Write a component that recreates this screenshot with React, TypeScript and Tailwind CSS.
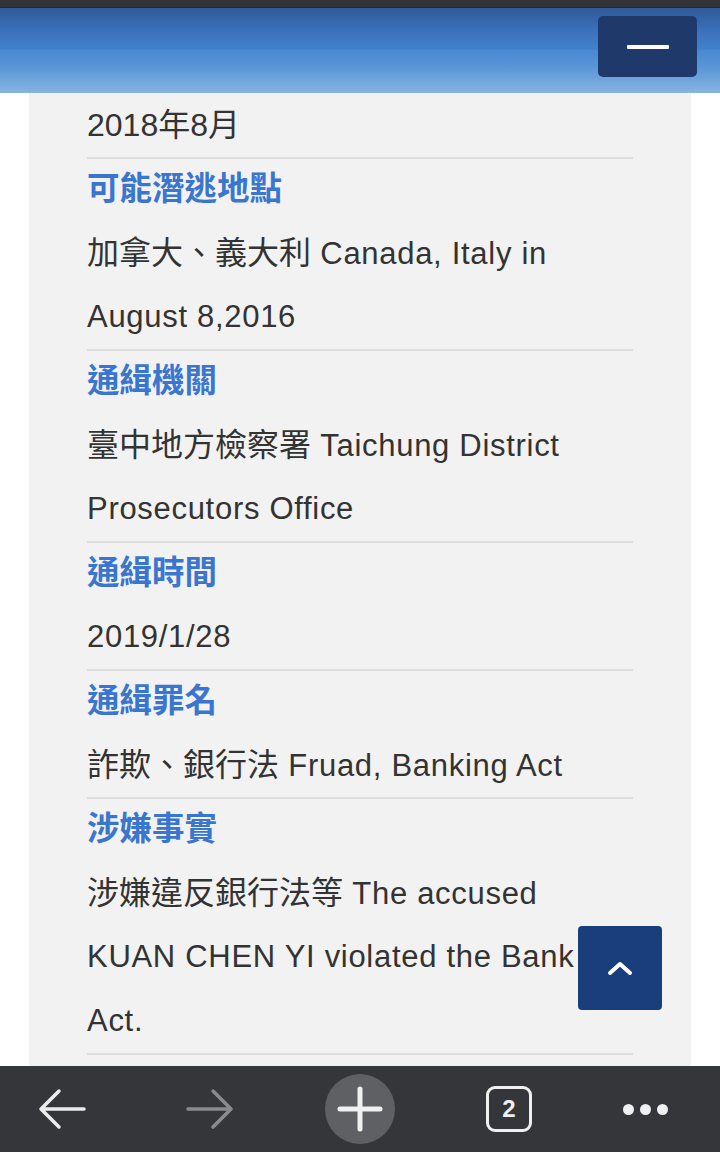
import { useState } from "react";

type Row = {
  title: string;
  lines: { zh?: string; en?: string }[];
};

const rows: Row[] = [
  {
    title: "可能潛逃地點",
    lines: [{ zh: "加拿大、義大利", en: " Canada, Italy in" }, { en: "August 8,2016" }],
  },
  {
    title: "通緝機關",
    lines: [{ zh: "臺中地方檢察署", en: " Taichung District" }, { en: "Prosecutors Office" }],
  },
  {
    title: "通緝時間",
    lines: [{ en: "2019/1/28" }],
  },
  {
    title: "通緝罪名",
    lines: [{ zh: "詐欺、銀行法", en: " Fruad, Banking Act" }],
  },
  {
    title: "涉嫌事實",
    lines: [
      { zh: "涉嫌違反銀行法等", en: " The accused" },
      { en: "KUAN CHEN YI violated the Bank" },
      { en: "Act." },
    ],
  },
];

const Line = ({ zh, en }: { zh?: string; en?: string }) => (
  <div className="h-[64px] leading-[64px] whitespace-nowrap text-[31px] tracking-[0.7px] text-[#333]">
    {zh && <span className="text-[32px] tracking-normal">{zh}</span>}
    {en}
  </div>
);

const App = () => {
  const [tabs] = useState(2);

  return (
    <div
      className="w-[720px] h-[1152px] bg-white flex flex-col overflow-hidden relative"
      style={{ fontFamily: '"Liberation Sans", "Noto Sans CJK TC", sans-serif' }}
    >
      {/* STATUS STRIP */}
      <div className="h-[7px] bg-[#333438] shrink-0" />
      <div className="h-[1px] bg-[#1e2a40] shrink-0" />
      {/* HEADER */}
      <div className="h-[85px] shrink-0 flex justify-end items-start pt-[8px] pr-[23px] bg-[linear-gradient(to_bottom,#2e5a9a_0%,#3a70b8_25%,#4280cc_48%,#4a88d2_50%,#5a96d8_70%,#88b4e0_100%)]">
        <button className="w-[99px] h-[61px] rounded-[5px] bg-[#1f3a6a] flex items-center justify-center">
          <span className="block w-[42px] h-[4px] bg-white rounded-[1px]" />
        </button>
      </div>

      {/* CONTENT */}
      <div className="flex-1 mx-[29px] bg-[#f2f2f2] pl-[58px] pr-[58px] overflow-hidden">
        <div className="border-b-2 border-[#dedede] -mb-0.5">
          <Line zh="2018年8月" />
        </div>
        {rows.map((row) => (
          <div key={row.title} className="border-b-2 border-[#dedede] -mb-0.5">
            <div className="h-[64px] leading-[64px] text-[32.5px] font-bold text-[#3a76cf]">
              {row.title}
            </div>
            {row.lines.map((l, i) => (
              <Line key={i} zh={l.zh} en={l.en} />
            ))}
          </div>
        ))}
      </div>

      {/* BACK TO TOP */}
      <button className="absolute left-[578px] top-[926px] w-[84px] h-[84px] rounded-[4px] bg-[#1a3d7c] flex items-center justify-center">
        <svg width="26" height="16" viewBox="0 0 26 16" fill="none">
          <path d="M3 13 L13 4 L23 13" stroke="white" strokeWidth="4" strokeLinecap="round" strokeLinejoin="round" />
        </svg>
      </button>

      {/* BROWSER BAR */}
      <div className="h-[86px] shrink-0 bg-[#35363a] flex items-center">
        <div className="w-[124px] flex justify-center">
          <svg width="48" height="42" viewBox="0 0 48 42" fill="none">
            <path d="M46 21 H3 M21 3 L3 21 L21 39" stroke="#ececec" strokeWidth="3.5" strokeLinecap="round" strokeLinejoin="round" />
          </svg>
        </div>
        <div className="w-[172px] flex justify-center">
          <svg width="48" height="42" viewBox="0 0 48 42" fill="none">
            <path d="M2 21 H45 M27 3 L45 21 L27 39" stroke="#8a8b8e" strokeWidth="3.5" strokeLinecap="round" strokeLinejoin="round" />
          </svg>
        </div>
        <div className="w-[128px] flex justify-center">
          <div className="w-[70px] h-[70px] rounded-full bg-[#5f6064] flex items-center justify-center">
            <svg width="46" height="46" viewBox="0 0 46 46" fill="none">
              <path d="M23 3 V43 M3 23 H43" stroke="#f0f0f0" strokeWidth="5" strokeLinecap="round" />
            </svg>
          </div>
        </div>
        <div className="w-[170px] flex justify-center">
          <div className="w-[46px] h-[46px] rounded-[9px] border-[3px] border-[#f0f0f0] flex items-center justify-center text-[#f0f0f0] text-[24px] font-semibold leading-none">
            {tabs}
          </div>
        </div>
        <div className="w-[102px] flex justify-center gap-[6px]">
          <span className="w-[11px] h-[11px] rounded-full bg-[#f0f0f0]" />
          <span className="w-[11px] h-[11px] rounded-full bg-[#f0f0f0]" />
          <span className="w-[11px] h-[11px] rounded-full bg-[#f0f0f0]" />
        </div>
      </div>
    </div>
  );
};

export default App;
